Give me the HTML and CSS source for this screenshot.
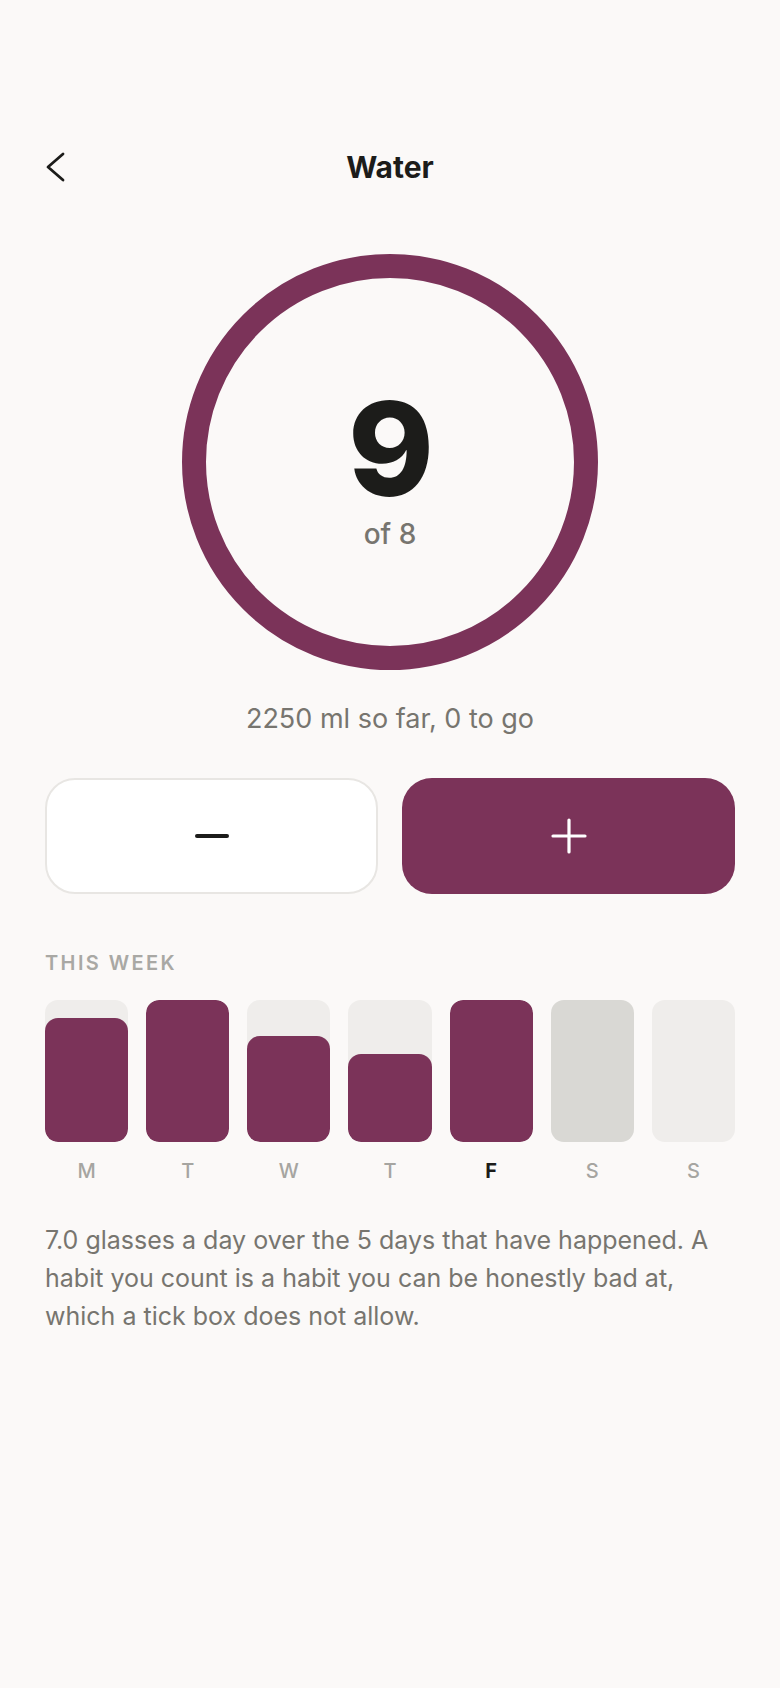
FILE: index.html
```html
<!DOCTYPE html>
<html lang="en">
<head>
    <meta charset="UTF-8">
    <meta name="viewport" content="width=device-width, initial-scale=1.0">
    <title>Water</title>
    <link rel="stylesheet" href="styles.css">
</head>
<body>
    <div class="screen">
        <header class="top-bar">
            <button class="back" aria-label="Back">
                <svg width="20" height="30" viewBox="0 0 20 30">
                    <path d="M18 2 L3 15 L18 28" fill="none" stroke="#1c1c1a" stroke-width="2.8" stroke-linecap="round" stroke-linejoin="round"/>
                </svg>
            </button>
            <h1>Water</h1>
            <div></div>
        </header>

        <div class="ring">
            <div class="ring-inner">
                <div class="count">9</div>
                <div class="goal">of 8</div>
            </div>
        </div>

        <p class="so-far">2250 ml so far, 0 to go</p>

        <div class="controls">
            <button class="btn minus" aria-label="Remove a glass">
                <svg width="36" height="36" viewBox="0 0 36 36">
                    <path d="M3 18 H33" stroke="#1c1c1a" stroke-width="4" stroke-linecap="round"/>
                </svg>
            </button>
            <button class="btn plus" aria-label="Add a glass">
                <svg width="36" height="36" viewBox="0 0 36 36">
                    <path d="M2 18 H34 M18 2 V34" stroke="#fff" stroke-width="3.2" stroke-linecap="round"/>
                </svg>
            </button>
        </div>

        <h2 class="section-label">THIS WEEK</h2>
        <div class="week">
            <div class="bar"><div class="fill" style="height: 87.5%"></div></div>
            <div class="bar"><div class="fill" style="height: 100%"></div></div>
            <div class="bar"><div class="fill" style="height: 75%"></div></div>
            <div class="bar"><div class="fill" style="height: 62.5%"></div></div>
            <div class="bar"><div class="fill" style="height: 100%"></div></div>
            <div class="bar dim"></div>
            <div class="bar"></div>
        </div>
        <div class="days">
            <span>M</span>
            <span>T</span>
            <span>W</span>
            <span>T</span>
            <span class="today">F</span>
            <span>S</span>
            <span>S</span>
        </div>

        <p class="note">7.0 glasses a day over the 5 days that have happened. A habit you count is a habit you can be honestly bad at, which a tick box does not allow.</p>
    </div>
</body>
</html>
```

FILE: styles.css
```css
body {
    margin: 0;
    background-color: #fbf9f8;
    font-family: Inter, "Noto Sans", sans-serif;
    color: #1c1c1a;
}
.screen {
    padding: 139px 45px 0;
}
.top-bar {
    display: grid;
    grid-template-columns: 1fr auto 1fr;
    align-items: center;
    height: 56px;
}
.back {
    background: none;
    border: none;
    padding: 0;
    width: 20px;
    height: 30px;
    cursor: pointer;
}
.back svg {
    display: block;
}
.top-bar h1 {
    margin: 0;
    font-size: 30px;
    font-weight: 700;
}
.ring {
    width: 416px;
    height: 416px;
    box-sizing: border-box;
    margin: 59px auto 0;
    border: 24px solid #7b3359;
    border-radius: 50%;
    display: flex;
    justify-content: center;
    align-items: center;
}
.ring-inner {
    text-align: center;
}
.count {
    font-size: 130px;
    font-weight: 800;
    line-height: 1.1;
    letter-spacing: -2px;
}
.goal {
    font-size: 28px;
    font-weight: 500;
    line-height: 1;
    color: #77756f;
}
.so-far {
    margin: 33px 0 0;
    text-align: center;
    font-size: 27px;
    line-height: 1.2;
    color: #77756f;
}
.controls {
    display: grid;
    grid-template-columns: 1fr 1fr;
    gap: 24px;
    margin-top: 43px;
}
.btn {
    height: 116px;
    border-radius: 30px;
    display: flex;
    justify-content: center;
    align-items: center;
    cursor: pointer;
}
.minus {
    background-color: #fff;
    border: 2px solid #e8e6e3;
}
.plus {
    background-color: #7b3359;
    border: none;
}
.section-label {
    margin: 57px 0 0;
    font-size: 20px;
    font-weight: 600;
    line-height: 1.2;
    letter-spacing: 2.4px;
    color: #a9a8a4;
}
.week {
    display: grid;
    grid-template-columns: repeat(7, 1fr);
    gap: 18px;
    margin-top: 25px;
}
.bar {
    height: 142px;
    border-radius: 13px;
    background-color: #efedeb;
    display: flex;
    flex-direction: column;
    justify-content: flex-end;
    overflow: hidden;
}
.bar.dim {
    background-color: #d9d8d4;
}
.fill {
    background-color: #7b3359;
    border-radius: 13px;
}
.days {
    display: grid;
    grid-template-columns: repeat(7, 1fr);
    gap: 18px;
    margin-top: 17px;
    text-align: center;
    font-size: 20px;
    font-weight: 500;
    line-height: 1.2;
    color: #a6a5a1;
}
.days .today {
    font-weight: 700;
    color: #1c1c1a;
}
.note {
    margin: 38px 0 0;
    font-size: 25px;
    line-height: 38px;
    color: #77756f;
}
```
